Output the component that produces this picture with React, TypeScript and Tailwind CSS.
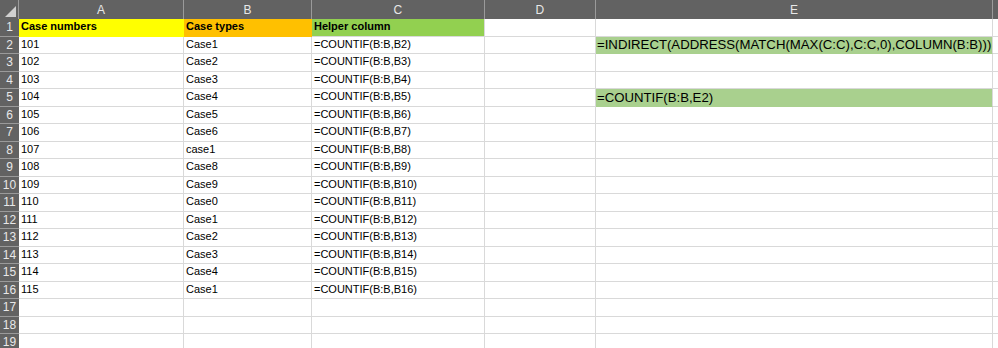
const cols = ['A', 'B', 'C', 'D', 'E']

type Row = { a: string; b: string; c: string; e?: string }

const rows: Row[] = [
  { a: '101', b: 'Case1', c: '=COUNTIF(B:B,B2)', e: '=INDIRECT(ADDRESS(MATCH(MAX(C:C),C:C,0),COLUMN(B:B)))' },
  { a: '102', b: 'Case2', c: '=COUNTIF(B:B,B3)' },
  { a: '103', b: 'Case3', c: '=COUNTIF(B:B,B4)' },
  { a: '104', b: 'Case4', c: '=COUNTIF(B:B,B5)', e: '=COUNTIF(B:B,E2)' },
  { a: '105', b: 'Case5', c: '=COUNTIF(B:B,B6)' },
  { a: '106', b: 'Case6', c: '=COUNTIF(B:B,B7)' },
  { a: '107', b: 'case1', c: '=COUNTIF(B:B,B8)' },
  { a: '108', b: 'Case8', c: '=COUNTIF(B:B,B9)' },
  { a: '109', b: 'Case9', c: '=COUNTIF(B:B,B10)' },
  { a: '110', b: 'Case0', c: '=COUNTIF(B:B,B11)' },
  { a: '111', b: 'Case1', c: '=COUNTIF(B:B,B12)' },
  { a: '112', b: 'Case2', c: '=COUNTIF(B:B,B13)' },
  { a: '113', b: 'Case3', c: '=COUNTIF(B:B,B14)' },
  { a: '114', b: 'Case4', c: '=COUNTIF(B:B,B15)' },
  { a: '115', b: 'Case1', c: '=COUNTIF(B:B,B16)' },
  { a: '', b: '', c: '' },
  { a: '', b: '', c: '' },
  { a: '', b: '', c: '' },
]

const cell = 'h-[17.5px] border-r border-b border-[#d9d9d9] pl-[2px] flex items-end pb-[1px] overflow-hidden whitespace-nowrap'
const rowHead = 'h-[17.5px] bg-[#626262] text-[#e8e8e8] text-[12px] flex items-center justify-center border-b border-[#9a9a9a]'

export default function App() {
  return (
    <div className="w-[998px] h-[348px] overflow-hidden bg-white font-['Liberation_Sans',Arial,sans-serif] text-[11px] text-black">
      <div className="grid grid-cols-[19px_165px_128px_172.5px_111.5px_397px_1fr]">
        {/* column headers */}
        <div className="h-[19px] bg-[#626262] border-r border-[#9a9a9a] relative">
          <svg className="absolute right-[2px] bottom-[2px]" width="11" height="11" viewBox="0 0 11 11">
            <polygon points="11,0 11,11 0,11" fill="#d0d0d0" />
          </svg>
        </div>
        {cols.map((c) => (
          <div
            key={c}
            className="h-[19px] bg-[#626262] text-[#e8e8e8] text-[12px] flex items-center justify-center border-r border-[#9a9a9a]"
          >
            {c}
          </div>
        ))}
        <div className="h-[19px] bg-[#626262]" />

        {/* row 1 */}
        <div className={rowHead}>1</div>
        <div className={`${cell} bg-[#ffff00] border-[#ffff00] font-bold`}>Case numbers</div>
        <div className={`${cell} bg-[#ffc000] border-[#ffc000] font-bold`}>Case types</div>
        <div className={`${cell} bg-[#92d050] border-[#92d050] font-bold`}>Helper column</div>
        <div className={cell} />
        <div className={cell} />
        <div className="h-[17.5px] border-b border-[#d9d9d9]" />

        {rows.map((r, i) => (
          <Line key={i} n={i + 2} r={r} />
        ))}
      </div>
    </div>
  )
}

function Line({ n, r }: { n: number; r: Row }) {
  return (
    <>
      <div className={rowHead}>{n}</div>
      <div className={cell}>{r.a}</div>
      <div className={cell}>{r.b}</div>
      <div className={cell}>{r.c}</div>
      <div className={cell} />
      {r.e ? (
        <div className="h-[17.5px] border-r border-b border-r-[#d9d9d9] border-b-[#a9d08e] bg-[#a9d08e] pl-[1px] flex items-center overflow-hidden whitespace-nowrap text-[13.2px] leading-none">
          {r.e}
        </div>
      ) : (
        <div className={cell} />
      )}
      <div className="h-[17.5px] border-b border-[#d9d9d9]" />
    </>
  )
}
